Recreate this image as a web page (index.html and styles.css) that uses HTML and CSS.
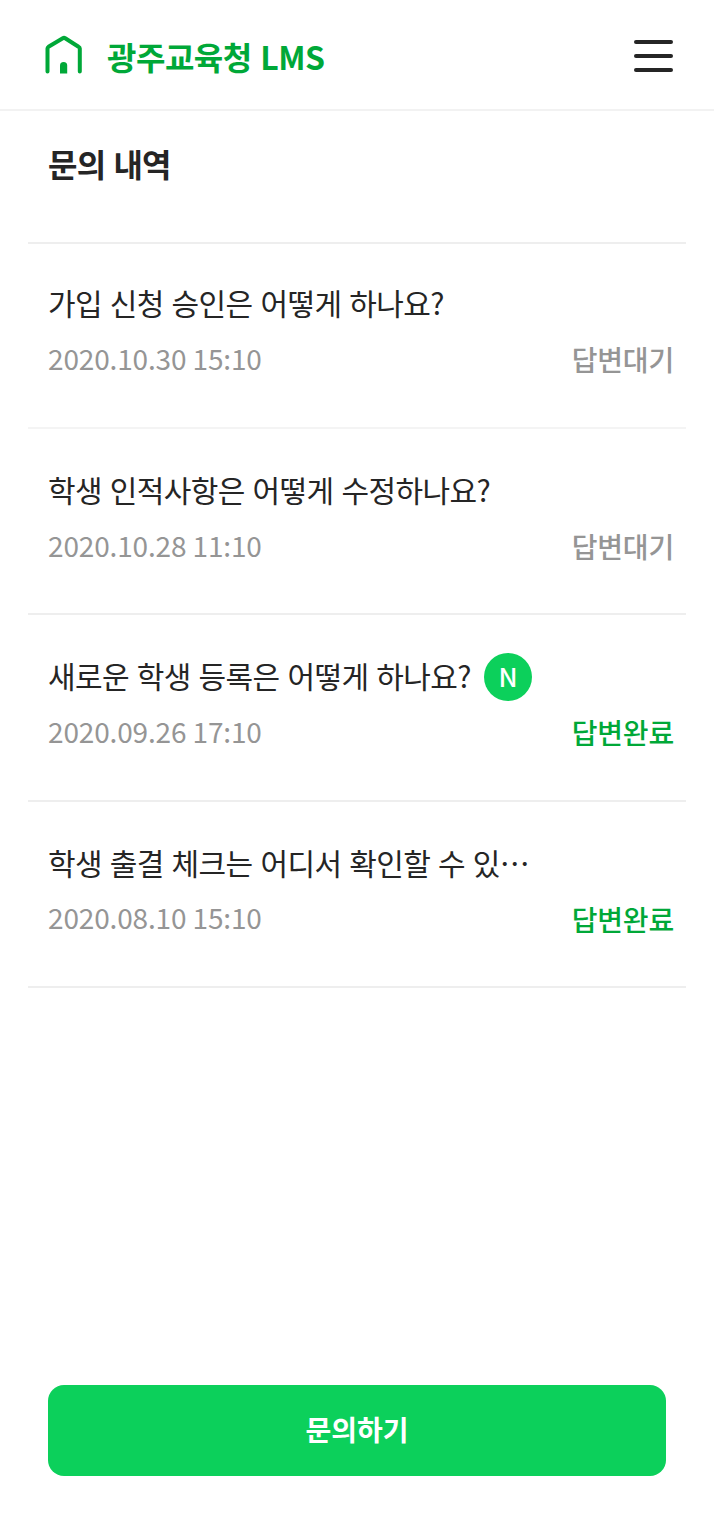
FILE: index.html
```html
<!DOCTYPE html>
<html lang="ko">
<head>
    <meta charset="UTF-8">
    <meta name="viewport" content="width=device-width, initial-scale=1.0">
    <title>문의 내역</title>
    <link rel="stylesheet" href="styles.css">
</head>
<body>

<header class="header">
    <a class="logo" href="#">
        <svg class="logo-icon" width="40" height="40" viewBox="0 0 40 40">
            <path d="M3.500 36.500V13.500Q3.500 12.500 4.500 11.800L18.800 3.200Q20 2.500 21.200 3.200L34.500 11.800Q35.800 12.500 35.800 13.500V36.500" fill="none" stroke="#00a838" stroke-width="4" stroke-linecap="round" stroke-linejoin="round"/>
            <path d="M16 38.500V30.500a3.600 3.600 0 0 1 7.200 0V38.500z" fill="#00a838"/>
        </svg>
        <span class="logo-text">광주교육청 LMS</span>
    </a>
    <button class="menu" aria-label="메뉴">
        <span></span>
        <span></span>
        <span></span>
    </button>
</header>

<main class="content">
    <h1 class="title">문의 내역</h1>

    <!-- 문의 목록 -->
    <ul class="list">
        <li class="item">
            <p class="question">가입 신청 승인은 어떻게 하나요?</p>
            <div class="info">
                <span class="date" lang="en">2020.10.30 15:10</span>
                <span class="state">답변대기</span>
            </div>
        </li>
        <li class="item">
            <p class="question">학생 인적사항은 어떻게 수정하나요?</p>
            <div class="info">
                <span class="date" lang="en">2020.10.28 11:10</span>
                <span class="state">답변대기</span>
            </div>
        </li>
        <li class="item">
            <p class="question">새로운 학생 등록은 어떻게 하나요? <span class="new">N</span></p>
            <div class="info">
                <span class="date" lang="en">2020.09.26 17:10</span>
                <span class="state done">답변완료</span>
            </div>
        </li>
        <li class="item">
            <p class="question">학생 출결 체크는 어디서 확인할 수 있⋯</p>
            <div class="info">
                <span class="date" lang="en">2020.08.10 15:10</span>
                <span class="state done">답변완료</span>
            </div>
        </li>
    </ul>
</main>

<div class="bottom">
    <button class="ask">문의하기</button>
</div>

</body>
</html>
```
FILE: styles.css
```css
* {
    box-sizing: border-box;
}
body {
    margin: 0;
    height: 1524px;
    display: flex;
    flex-direction: column;
    font-family: "Noto Sans CJK KR", sans-serif;
    background-color: #fff;
    color: #252525;
}
button {
    font-family: inherit;
    border: none;
    padding: 0;
    cursor: pointer;
}
.header {
    height: 111px;
    padding: 0 41px 0 44px;
    display: flex;
    justify-content: space-between;
    align-items: center;
    border-bottom: 2px solid #f2f2f2;
}
.logo {
    display: flex;
    align-items: center;
    gap: 23px;
    text-decoration: none;
    color: #00a838;
}
.logo-text {
    padding-top: 2px;
    font-size: 32px;
    font-weight: 700;
    letter-spacing: -0.5px;
}
.menu {
    width: 39px;
    padding-top: 2px;
    display: flex;
    flex-direction: column;
    gap: 10px;
    background: none;
}
.menu span {
    height: 4px;
    border-radius: 2px;
    background-color: #252525;
}
.content {
    flex: 1;
    padding: 0 28px;
}
.title {
    margin: 0;
    padding: 28px 20px 0;
    height: 131px;
    font-size: 32px;
    line-height: 48px;
    font-weight: 700;
    letter-spacing: -0.8px;
}
.list {
    margin: 0;
    padding: 0;
    list-style: none;
    border-top: 2px solid #eee;
}
.item {
    height: 186.300px;
    padding: 36px 12px 0 20px;
    border-bottom: 2px solid #eee;
}
.item:first-child {
    height: 185px;
    padding-top: 34px;
    border-bottom-color: #f4f4f4;
}
.question {
    margin: 0;
    height: 48px;
    display: flex;
    align-items: center;
    gap: 13px;
    font-size: 30px;
    letter-spacing: -0.6px;
    white-space: nowrap;
}
.new {
    width: 48px;
    height: 48px;
    margin-top: 3px;
    border-radius: 50%;
    background-color: #0cd05b;
    color: #fff;
    font-size: 26px;
    font-weight: 500;
    line-height: 46px;
    text-align: center;
}
.info {
    margin-top: 7px;
    display: flex;
    justify-content: space-between;
    align-items: center;
    line-height: 46px;
    color: #959595;
}
.date {
    font-family: "Noto Sans CJK JP", sans-serif;
    font-size: 28px;
    letter-spacing: -0.15px;
}
.state {
    padding-top: 3px;
    font-size: 28px;
    font-weight: 500;
    letter-spacing: -0.2px;
}
.done {
    color: #00a838;
}
.bottom {
    padding: 0 48px 48px;
}
.ask {
    width: 100%;
    height: 91px;
    padding-bottom: 3px;
    border-radius: 16px;
    background-color: #0cd05b;
    color: #fff;
    font-size: 28px;
    font-weight: 700;
}
```
